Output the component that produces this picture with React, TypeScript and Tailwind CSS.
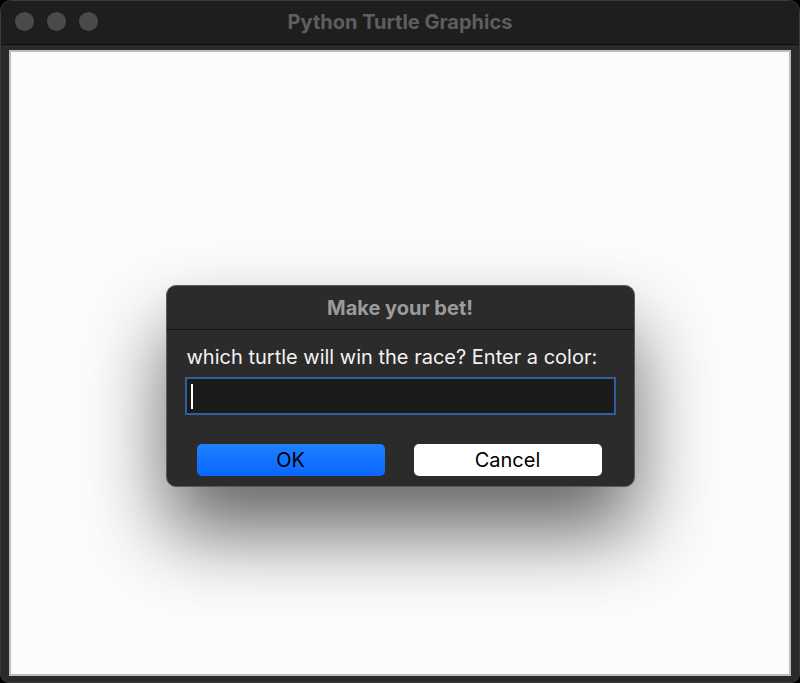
export default function App() {
  return (
    <div className="w-[800px] h-[683px] bg-black font-['Inter','Liberation_Sans',Arial,sans-serif]">
      <div className="flex h-full w-full flex-col overflow-hidden rounded-t-[11px] rounded-b-[9px] border border-[#3a3a3a] bg-[#2a2a2a]">
        {/* Title bar */}
        <div className="relative flex h-[43px] shrink-0 items-center justify-center bg-[#1e1e1e] pb-[2px]">
          <div className="absolute left-[14px] top-[11px] flex gap-[13px]">
            <div className="h-[19px] w-[19px] rounded-full bg-[#4a4a4a]" />
            <div className="h-[19px] w-[19px] rounded-full bg-[#4a4a4a]" />
            <div className="h-[19px] w-[19px] rounded-full bg-[#4a4a4a]" />
          </div>
          <span className="text-[20px] font-bold text-[#5e5e5e]">Python Turtle Graphics</span>
        </div>
        <div className="h-[1px] shrink-0 bg-[#0c0c0c]" />

        {/* Canvas */}
        <div className="flex flex-1 px-[8px] pt-[5px] pb-[6px]">
          <div className="flex flex-1 justify-center border-2 border-[#bdbdbd] bg-[#fcfcfc] pt-[233px]">
            {/* Dialog */}
            <div className="flex h-[202px] w-[469px] flex-col overflow-hidden rounded-[10px] border border-[#5a5a5a] bg-[#2b2b2b] shadow-[0_45px_80px_rgba(0,0,0,0.6)]">
              <div className="flex h-[43px] shrink-0 items-center justify-center">
                <span className="text-[20px] font-bold text-[#9b9b9b]">Make your bet!</span>
              </div>
              <div className="h-[1px] shrink-0 bg-[#121212]" />
              <div className="flex flex-col px-[18px] pt-[14px]">
                <p className="pl-[2px] text-[20px] leading-[26px] text-[#f2f2f2]">
                  which turtle will win the race? Enter a color:
                </p>
                <div className="mt-[7px] flex h-[38px] items-center border-2 border-[#2f5f9e] bg-[#1a1a1a] pl-[4px]">
                  <div className="h-[25px] w-[2px] bg-white" />
                </div>
                <div className="mt-[29px] flex gap-[29px] px-[12px]">
                  <button className="h-[32px] w-[188px] rounded-[5px] bg-gradient-to-b from-[#1f80ff] to-[#0a66ff] text-[20px] text-black">
                    OK
                  </button>
                  <button className="h-[32px] w-[188px] rounded-[5px] bg-white text-[20px] text-black">
                    Cancel
                  </button>
                </div>
              </div>
            </div>
          </div>
        </div>
      </div>
    </div>
  );
}
